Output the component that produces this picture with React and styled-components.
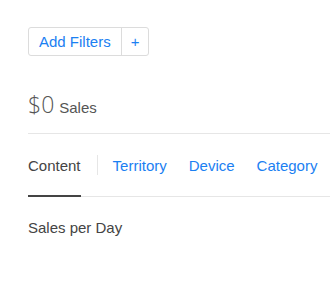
import React from "react";
import styled, { createGlobalStyle } from "styled-components";

const Global = createGlobalStyle`
  html, body { margin: 0; padding: 0; background: #fff; }
  body { font-family: "Liberation Sans", Arial, sans-serif; -webkit-font-smoothing: antialiased; }
`;

const Page = styled.div`
  padding: 27px 0 0 28px;
  width: 302px;
  overflow: hidden;
`;

const FilterGroup = styled.div`
  display: inline-flex;
  height: 29px;
  border: 1px solid #dcdcdc;
  border-radius: 3px;
  box-sizing: border-box;
`;

const FilterButton = styled.button`
  background: none;
  border: none;
  border-left: ${(p) => (p.$divider ? "1px solid #dcdcdc" : "none")};
  padding: 0 ${(p) => (p.$narrow ? "9px" : "10px")};
  font-family: inherit;
  font-size: 15px;
  color: #1b80f2;
  cursor: pointer;
  line-height: 27px;
`;

const Total = styled.div`
  margin-top: 36px;
  display: flex;
  align-items: baseline;
  gap: 5px;
  color: #555;
  padding-bottom: 13px;
  border-bottom: 1px solid #e6e6e6;
  line-height: 25px;
`;

const Amount = styled.span`
  font-family: "Open Sans", "Liberation Sans", sans-serif;
  font-weight: 300;
  font-size: 23px;
  line-height: 25px;
`;

const AmountLabel = styled.span`
  font-size: 15px;
`;

const Tabs = styled.div`
  display: flex;
  align-items: center;
  border-bottom: 1px solid #e6e6e6;
  height: 62px;
`;

const Tab = styled.div`
  position: relative;
  flex-shrink: 0;
  height: 100%;
  display: flex;
  align-items: center;
  font-size: 15px;
  color: ${(p) => (p.$active ? "#444" : "#1b80f2")};
  margin-right: ${(p) => (p.$active ? "0" : "22px")};
  white-space: nowrap;
  &::after {
    content: "";
    display: ${(p) => (p.$active ? "block" : "none")};
    position: absolute;
    left: 0;
    right: 0;
    bottom: -1px;
    height: 2px;
    background: #444;
  }
`;

const TabDivider = styled.div`
  flex-shrink: 0;
  width: 1px;
  height: 20px;
  background: #e6e6e6;
  margin: 0 15px 0 16px;
`;

const Section = styled.div`
  margin-top: 22px;
  font-size: 15px;
  color: #444;
`;

export default function App() {
  return (
    <>
      <Global />
      <Page>
        <FilterGroup>
          <FilterButton>Add Filters</FilterButton>
          <FilterButton $divider $narrow>+</FilterButton>
        </FilterGroup>
        <Total>
          <Amount>$0</Amount>
          <AmountLabel>Sales</AmountLabel>
        </Total>
        <Tabs>
          <Tab $active>Content</Tab>
          <TabDivider />
          <Tab>Territory</Tab>
          <Tab>Device</Tab>
          <Tab>Category</Tab>
        </Tabs>
        <Section>Sales per Day</Section>
      </Page>
    </>
  );
}
